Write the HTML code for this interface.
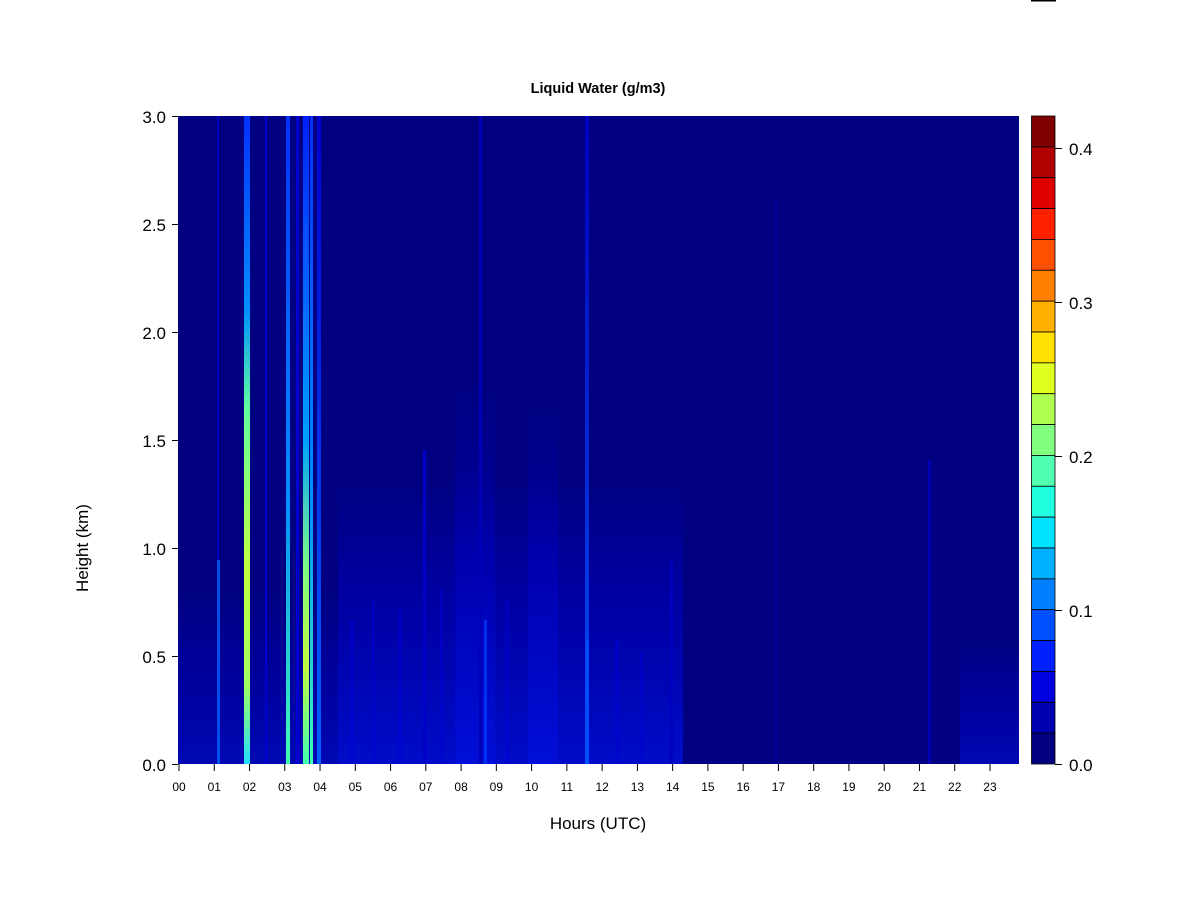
<!DOCTYPE html>
<html><head><meta charset="utf-8"><style>
html,body{margin:0;padding:0;background:#fff;}
svg{display:block;font-family:"Liberation Sans",Arial,sans-serif;}
</style></head><body>
<svg width="1200" height="900" viewBox="0 0 1200 900" xmlns="http://www.w3.org/2000/svg">
<defs>
<linearGradient id="low" x1="0" y1="0" x2="0" y2="1">
<stop offset="0" stop-color="#0000c8" stop-opacity="0"/>
<stop offset="0.35" stop-color="#0000c8" stop-opacity="0.5"/>
<stop offset="1" stop-color="#0010e0" stop-opacity="0.9"/>
</linearGradient>
<linearGradient id="s1" x1="0" y1="0" x2="0" y2="1">
<stop offset="0" stop-color="#0030ff"/>
<stop offset="0.3" stop-color="#0090ff"/>
<stop offset="0.45" stop-color="#60ffa0"/>
<stop offset="0.7" stop-color="#c0ff40"/>
<stop offset="0.88" stop-color="#a0ff60"/>
<stop offset="1" stop-color="#20e0ff"/>
</linearGradient>
<linearGradient id="s2" x1="0" y1="0" x2="0" y2="1">
<stop offset="0" stop-color="#0030ff"/>
<stop offset="0.6" stop-color="#0090ff"/>
<stop offset="1" stop-color="#40ffb0"/>
</linearGradient>
<linearGradient id="s3" x1="0" y1="0" x2="0" y2="1">
<stop offset="0" stop-color="#0020ff"/>
<stop offset="0.5" stop-color="#00a0ff"/>
<stop offset="0.7" stop-color="#80ff80"/>
<stop offset="0.85" stop-color="#c0ff40"/>
<stop offset="1" stop-color="#40ffb0"/>
</linearGradient>
<linearGradient id="s4" x1="0" y1="0" x2="0" y2="1">
<stop offset="0" stop-color="#0000d0"/>
<stop offset="1" stop-color="#0060ff"/>
</linearGradient>
</defs>
<rect x="1031" y="0" width="25" height="1.5" fill="#000"/>
<text x="598" y="93" font-size="14.5" font-weight="bold" text-anchor="middle">Liquid Water (g/m3)</text>
<rect x="178" y="116" width="841" height="648" fill="#000080"/>
<rect x="178" y="590" width="160" height="174" fill="url(#low)" opacity="0.6"/>
<rect x="338" y="480" width="345" height="284" fill="url(#low)" opacity="0.85"/>
<rect x="455" y="380" width="40" height="384" fill="url(#low)" opacity="0.7"/>
<rect x="528" y="400" width="30" height="364" fill="url(#low)" opacity="0.7"/>
<rect x="960" y="640" width="59" height="124" fill="url(#low)" opacity="0.6"/>
<g fill="#0000d8" opacity="0.5">
<rect x="350" y="620" width="4" height="144"/><rect x="372" y="600" width="3" height="164"/>
<rect x="398" y="610" width="4" height="154"/><rect x="440" y="590" width="3" height="174"/>
<rect x="505" y="600" width="4" height="164"/><rect x="615" y="640" width="4" height="124"/>
<rect x="640" y="650" width="3" height="114"/>
</g>
<rect x="217" y="560" width="3" height="204" fill="#0060ff" opacity="0.8"/>
<rect x="217" y="116" width="2" height="444" fill="#0000c0"/>
<rect x="265" y="116" width="2" height="648" fill="#0000d0"/>
<rect x="296" y="116" width="3" height="648" fill="#0000d0"/>
<rect x="317" y="116" width="4" height="648" fill="url(#s4)"/>
<rect x="479" y="116" width="3" height="648" fill="#0000b8"/>
<rect x="585" y="116" width="4" height="648" fill="url(#s4)" opacity="0.8"/>
<rect x="423" y="450" width="3" height="314" fill="#0000c8"/>
<rect x="775" y="200" width="2" height="564" fill="#0000a0"/>
<rect x="928" y="460" width="3" height="304" fill="#0000b0"/>
<rect x="670" y="560" width="3" height="204" fill="#0000c0"/>
<rect x="484" y="620" width="3" height="144" fill="#0040ff" opacity="0.7"/>
<rect x="586" y="640" width="3" height="124" fill="#0050ff" opacity="0.8"/>
<rect x="244" y="116" width="6" height="648" fill="url(#s1)"/>
<rect x="286" y="116" width="4" height="648" fill="url(#s2)"/>
<rect x="303" y="116" width="6" height="648" fill="url(#s3)"/>
<rect x="310" y="116" width="3" height="648" fill="url(#s2)"/>
<g stroke="#000" stroke-width="1">
<line x1="172" y1="116.5" x2="178" y2="116.5"/><line x1="172" y1="224.5" x2="178" y2="224.5"/>
<line x1="172" y1="332.5" x2="178" y2="332.5"/><line x1="172" y1="440.5" x2="178" y2="440.5"/>
<line x1="172" y1="548.5" x2="178" y2="548.5"/><line x1="172" y1="656.5" x2="178" y2="656.5"/>
<line x1="172" y1="764.5" x2="178" y2="764.5"/>
</g>
<g font-size="17" text-anchor="end">
<text x="166" y="123">3.0</text><text x="166" y="231">2.5</text><text x="166" y="339">2.0</text>
<text x="166" y="447">1.5</text><text x="166" y="555">1.0</text><text x="166" y="663">0.5</text>
<text x="166" y="771">0.0</text>
</g>
<text x="88" y="548" font-size="17" text-anchor="middle" transform="rotate(-90 88 548)">Height (km)</text>
<g stroke="#000" stroke-width="1" id="xt"></g>
<g font-size="12" text-anchor="middle" id="xl"></g>
<text x="598" y="829" font-size="17" text-anchor="middle">Hours (UTC)</text>
<g stroke="#000" stroke-width="0.8" id="cb"></g>
<g stroke="#000" stroke-width="1">
<line x1="1055" y1="148.5" x2="1062" y2="148.5"/><line x1="1055" y1="302.5" x2="1062" y2="302.5"/>
<line x1="1055" y1="456.5" x2="1062" y2="456.5"/><line x1="1055" y1="610.5" x2="1062" y2="610.5"/>
<line x1="1055" y1="764.5" x2="1062" y2="764.5"/>
</g>
<g font-size="17">
<text x="1069" y="155">0.4</text><text x="1069" y="309">0.3</text><text x="1069" y="463">0.2</text>
<text x="1069" y="617">0.1</text><text x="1069" y="771">0.0</text>
</g>
<script>
var ns="http://www.w3.org/2000/svg";
var xt=document.getElementById("xt"),xl=document.getElementById("xl");
for(var i=0;i<24;i++){var x=179+i*35.26;
var l=document.createElementNS(ns,"line");l.setAttribute("x1",x);l.setAttribute("x2",x);l.setAttribute("y1",764);l.setAttribute("y2",771);xt.appendChild(l);
var t=document.createElementNS(ns,"text");t.setAttribute("x",x);t.setAttribute("y",791);t.textContent=(i<10?"0":"")+i;xl.appendChild(t);}
var cols=["#800000","#b00000","#e00000","#ff2000","#ff5000","#ff8000","#ffb000","#ffe000","#e0ff20","#b0ff50","#80ff80","#50ffb0","#20ffe0","#00e0ff","#00b0ff","#0080ff","#0050ff","#0020ff","#0000e0","#0000b0","#000080"];
var cb=document.getElementById("cb"),h=648/21;
for(var j=0;j<21;j++){var r=document.createElementNS(ns,"rect");r.setAttribute("x",1031.5);r.setAttribute("y",116+j*h);r.setAttribute("width",23.5);r.setAttribute("height",h);r.setAttribute("fill",cols[j]);cb.appendChild(r);}
</script>
</svg>
</body></html>
